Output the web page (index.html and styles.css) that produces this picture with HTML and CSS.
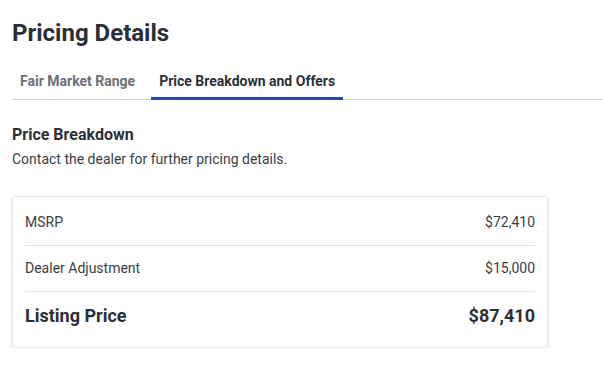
FILE: index.html
```html
<!DOCTYPE html>
<html lang="en">

<head>
    <meta charset="UTF-8">
    <meta name="viewport" content="width=device-width, initial-scale=1.0">
    <title>Pricing Details</title>
    <link rel="stylesheet" href="styles.css">
</head>

<body>
    <div class="pricing">
        <h2 class="pricing-title">Pricing Details</h2>
        <div class="tabs">
            <div class="tab">Fair Market Range</div>
            <div class="tab active">Price Breakdown and Offers</div>
        </div>
        <section class="breakdown">
            <h3>Price Breakdown</h3>
            <p>Contact the dealer for further pricing details.</p>
            <div class="card">
                <div class="row">
                    <span>MSRP</span>
                    <span>$72,410</span>
                </div>
                <div class="row">
                    <span>Dealer Adjustment</span>
                    <span>$15,000</span>
                </div>
                <div class="row total">
                    <span>Listing Price</span>
                    <span>$87,410</span>
                </div>
            </div>
        </section>
    </div>
</body>

</html>
```

FILE: styles.css
```css
:root {
  --color-text: #2b2f38;
  --color-muted: #6c7077;
  --color-blue: #2a4a9f;
  --color-line: #e1e1e3;
}
body {
  margin: 0;
  padding: 0;
  font-family: Roboto, "Liberation Sans", sans-serif;
  color: var(--color-text);
  background: #fff;
}
.pricing {
  padding: 17px 0 0 12px;
}
.pricing .pricing-title {
  margin: 0;
  font-size: 24px;
  line-height: 32px;
  font-weight: 700;
}
.pricing .tabs {
  margin-top: 16px;
  display: flex;
  column-gap: 8px;
  border-bottom: 1px solid #d4d4d6;
}
.pricing .tabs .tab {
  padding: 6px 8px;
  margin-bottom: -1px;
  font-size: 14px;
  line-height: 20px;
  font-weight: 700;
  color: var(--color-muted);
  border-bottom: 3px solid transparent;
}
.pricing .tabs .active {
  color: var(--color-text);
  border-bottom-color: var(--color-blue);
}
.breakdown h3 {
  margin: 24px 0 0;
  font-size: 16px;
  line-height: 22px;
  font-weight: 700;
}
.breakdown p {
  margin: 3px 0 0;
  font-size: 14px;
  line-height: 20px;
  color: #3a3e46;
}
.breakdown .card {
  width: 510px;
  margin-top: 27px;
  padding: 3px 12px 7px;
  border: 1px solid #e8e8ea;
  border-radius: 4px;
  box-shadow: 0 1px 4px rgba(0, 0, 0, 0.12);
}
.breakdown .card .row {
  display: flex;
  justify-content: space-between;
  padding: 12px 0;
  font-size: 14px;
  line-height: 21px;
  color: #3a3e46;
  border-bottom: 1px solid var(--color-line);
}
.breakdown .card .total {
  border-bottom: none;
  font-size: 18px;
  line-height: 24px;
  font-weight: 700;
  color: var(--color-text);
}
```
